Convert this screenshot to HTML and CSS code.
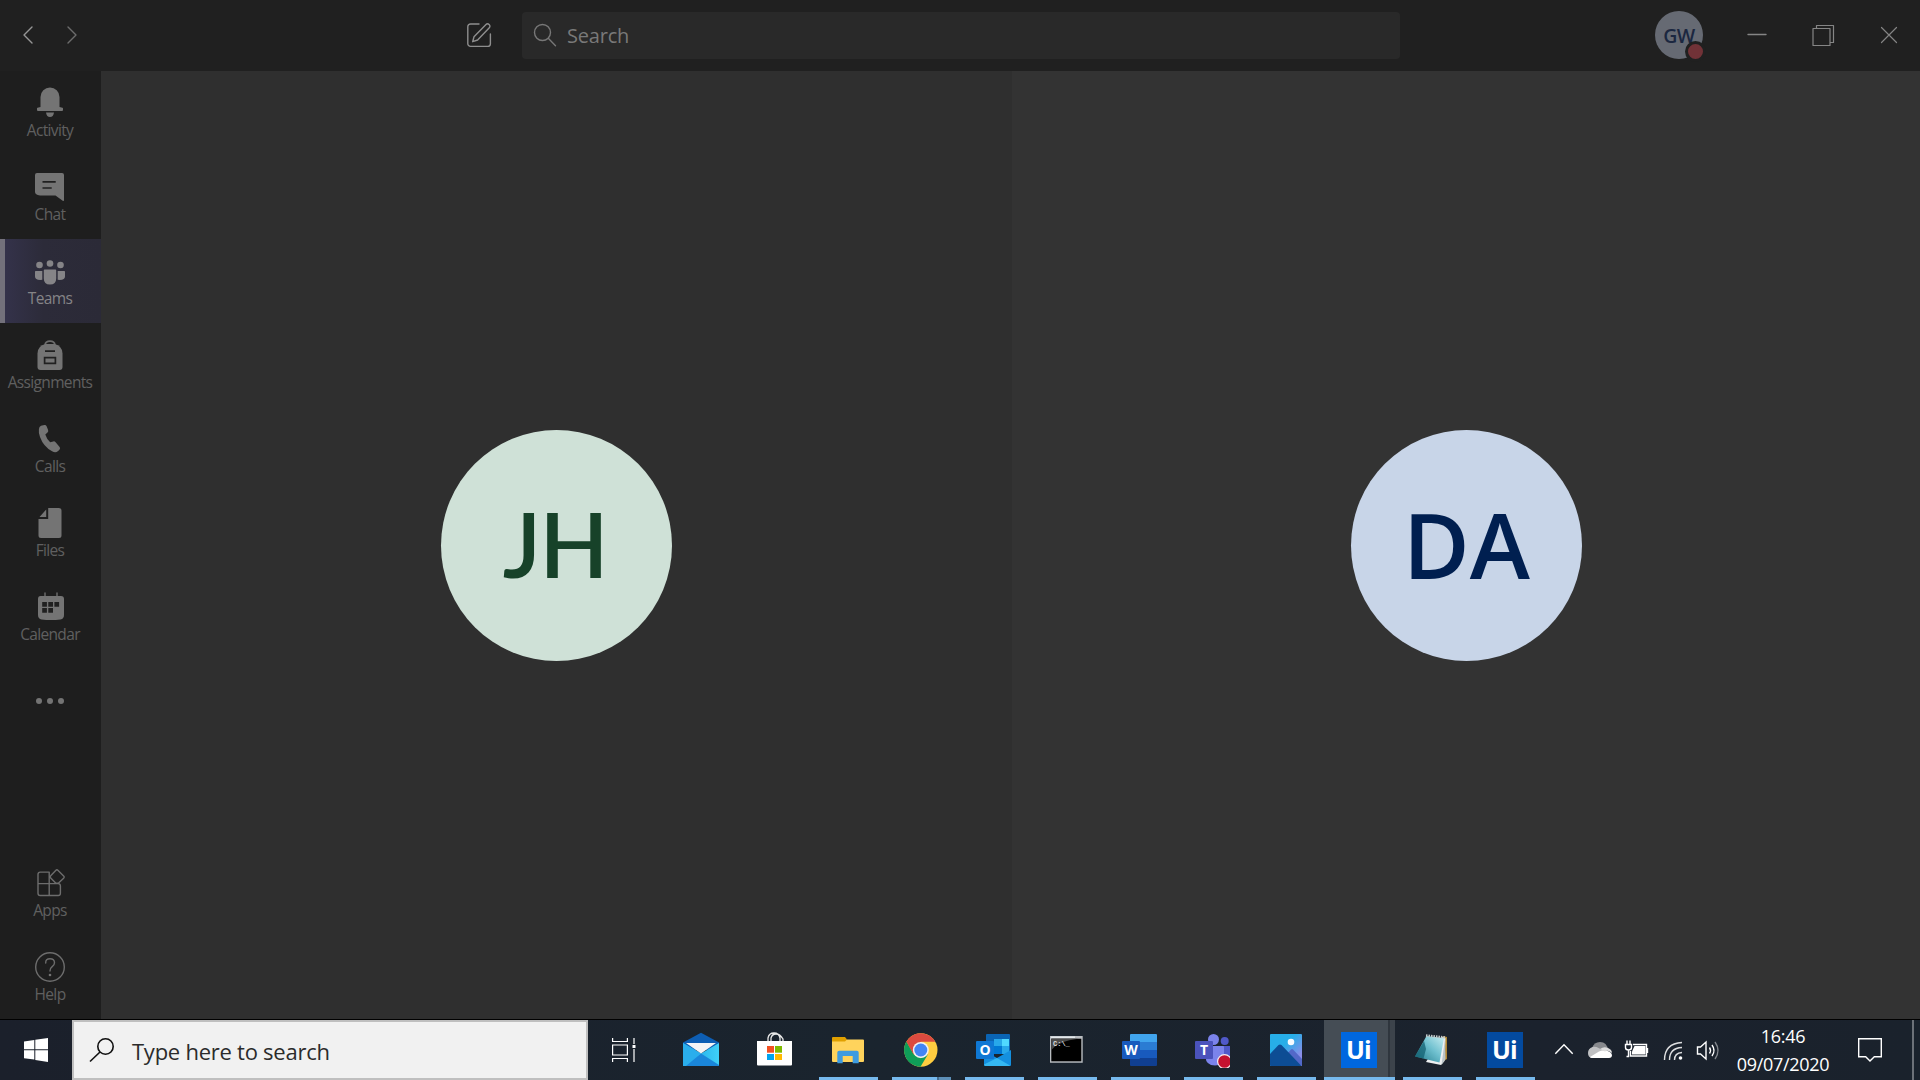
FILE: index.html
```html
<!DOCTYPE html>
<html lang="en">
<head>
<meta charset="utf-8">
<title>Microsoft Teams</title>
<link rel="stylesheet" href="styles.css">
</head>
<body>
<div class="screen">
  <header class="topbar">
    <nav class="history">
      <svg width="22" height="24" viewBox="0 0 22 24"><path class="line" d="M15 4 7 12l8 8"/></svg>
      <svg class="dim" width="22" height="24" viewBox="0 0 22 24"><path class="line" d="M8 4l8 8-8 8"/></svg>
    </nav>
    <svg class="compose" width="28" height="28" viewBox="0 0 28 28"><path class="line" d="M14 3H5.5A2.7 2.7 0 0 0 2.800 5.700v17a2.700 2.700 0 0 0 2.700 2.700h17.200a2.700 2.700 0 0 0 2.700-2.700V13"/><path class="line" d="M7.700 20.700l1.300-5 12-12.300a2.100 2.100 0 0 1 3 0l.3.300a2.100 2.100 0 0 1 0 3L12.600 19z"/></svg>
    <div class="search">
      <svg width="24" height="24" viewBox="0 0 24 24"><circle class="line" cx="9.500" cy="9.500" r="8"/><path class="line" d="M15.300 15.300l7.200 7.400"/></svg>
      <span>Search</span>
    </div>
    <div class="me"><span>GW</span><i class="presence"></i></div>
    <div class="window-buttons">
      <svg width="24" height="24" viewBox="0 0 24 24"><path class="line" d="M3 11.500h18"/></svg>
      <svg width="24" height="24" viewBox="0 0 24 24"><path class="line thin" d="M2 5.500h17v17H2zM5.500 5V2.500H22.500V19.500H19.500"/></svg>
      <svg width="24" height="24" viewBox="0 0 24 24"><path class="line thin" d="M4.500 4.500l15 15m0-15l-15 15"/></svg>
    </div>
  </header>

  <div class="body">
    <aside class="rail">
      <div class="item"><svg viewBox="30 13 40 40"><path d="M40.500 36V26a9.500 9.500 0 0 1 19 0V36l3 .8a1 1 0 0 1 .5.8V39q0 .9-1 .9H38q-1 0-1-.9v-1.400a1 1 0 0 1 .5-.8zM46 41.500h8q-.7 4.500-4 4.500t-4-4.500z"/></svg><span>Activity</span></div>
      <div class="item"><svg viewBox="30 13 40 40"><path d="M37 18h25q2 0 2 2v25q0 1.400-1.300.7L55.500 40.400H40Q35 40 35 37V20q0-2 2-2z"/><path class="cut" d="M42.500 26.800h13.200M42.500 33h9.200"/></svg><span>Chat</span></div>
      <div class="item selected"><svg viewBox="30 13 40 40"><circle cx="39.500" cy="26" r="3.300"/><circle cx="50" cy="24.500" r="3.300"/><circle cx="60.500" cy="26" r="3.300"/><path d="M44.500 30.500h11q.7 0 .7.700v8.300q0 6-6.200 6t-6.200-6v-8.300q0-.7.700-.7zM35.700 32h6.600v8.800q-7.300.7-7.300-3.300v-4.800q0-.7.700-.7zM57.700 32h6.600q.7 0 .7.700v4.800q0 4-7.300 3.300z"/></svg><span>Teams</span></div>
      <div class="item"><svg viewBox="30 13 40 40"><path class="line bold" d="M45 22q.5-3.800 5-3.800t5 3.800"/><path d="M45.500 21h9q8 2 8 9.500V44q0 3-3 3h-19q-3 0-3-3V30.500q0-7.500 8-9.500z"/><path class="cut" d="M45 28.100h10M44.600 34.700h10.800v5.600H44.600z"/></svg><span>Assignments</span></div>
      <div class="item"><svg viewBox="30 13 40 40"><path d="M41 18.800l3.300-.8q1.600-.3 2.300 1.200l1.500 3.700q.5 1.500-.6 2.600l-2.200 2.100q1.300 4.500 4.900 7.700l3-.9q1.500-.4 2.400.9l4 4.600q1 1.300 0 2.500l-1.500 1.600q-2.500 2.200-6 .3-8.500-4.500-12.100-14.300-1.600-4.500-1.100-7.700.2-2.600 2.100-3.500z"/></svg><span>Calls</span></div>
      <div class="item"><svg viewBox="30 13 40 40"><path d="M48.200 17h10.600q2.700 0 2.700 2.500v25q0 2.500-2.500 2.500H41q-2.500 0-2.500-2.500V28h9.700zM46.200 18.500V26h-6.700z"/></svg><span>Files</span></div>
      <div class="item"><svg viewBox="30 13 40 40"><path d="M45 18v4M57 18v4" class="line"/><path d="M40.500 21H61q3 0 3 3v16q0 3.800-3.500 4.400-9.500 1.400-19 0Q38 43.800 38 40V24q0-3 2.500-3z"/><path fill="#202020" d="M42.200 27h4.700v4.700h-4.700zm6.100 0H53v4.700h-4.700zm6.100 0h4.700v4.700h-4.700zM42.200 33h4.700v4.700h-4.700zm6.100 0H53v4.700h-4.700z"/></svg><span>Calendar</span></div>
      <div class="item"><svg viewBox="30 13 40 58" class="more"><circle cx="39" cy="42" r="3"/><circle cx="50" cy="42" r="3"/><circle cx="61" cy="42" r="3"/></svg></div>
      <div class="item apps"><svg viewBox="30 13 40 40"><path class="line" d="M49.200 21.100h-9q-2.200 0-2.200 2.200v19q0 2.200 2.200 2.200h18q2.200 0 2.200-2.200v-7.500q0-2.200-2.200-2.200H38M49.200 21.100V44.500M50.700 24.700l5-5.300q1.200-1.200 2.400 0l5.500 5.500q1.200 1.200 0 2.400l-5.300 5h-2.400l-5.200-5.200q-1.100-1.200 0-2.400z"/></svg><span>Apps</span></div>
      <div class="item"><svg viewBox="30 13 40 40"><circle class="line" cx="50" cy="32" r="14.300"/><path class="line" d="M45.700 28q-.2-4.200 4.300-4.200t4.500 4q0 2.200-2.300 3.800-2.200 1.500-2.200 4.400"/><circle cx="50" cy="40" r="1.300"/></svg><span>Help</span></div>
    </aside>
    <main class="stage">
      <section class="tile first"><div class="avatar green"><span>JH</span></div></section>
      <section class="tile second"><div class="avatar blue"><span>DA</span></div></section>
    </main>
  </div>

  <footer class="taskbar">
    <div class="start"><svg width="24" height="24" viewBox="0 0 24 24"><path fill="#fff" d="M0 3.500l10.300-1.500v9.300H0zM11.300 1.800L24 0v11.300H11.300zM0 12.300h10.300v9.300L0 20.200zM11.300 12.300H24V24l-12.700-1.900z"/></svg></div>
    <div class="find">
      <svg width="26" height="26" viewBox="0 0 26 26"><g fill="none" stroke="#111" stroke-width="1.600"><circle cx="16.500" cy="9.500" r="7.700"/><path d="M11 15L1 24.500"/></g></svg>
      <span>Type here to search</span>
    </div>
    <div class="taskview"><svg width="26" height="24" viewBox="0 0 26 24"><g fill="none" stroke="#fff" stroke-width="1.200"><path d="M1.600 0v3.500h14.800V0M1.600 7h14.800v10H1.600zM1.600 24v-3.500h14.800V24M23 0v6M23 11v13"/></g><path fill="#fff" d="M21.500 7h3v3h-3z"/></svg></div>

    <div class="apps-strip">
      <div class="app"><svg viewBox="0 0 36 36">
        <defs><linearGradient id="mail" x1="0" x2="1"><stop offset="0" stop-color="#1b9fe4"/><stop offset="1" stop-color="#3fd0f7"/></linearGradient></defs>
        <path fill="#0d5eb4" d="M18 .7L36 10.500V18H0V10.500z"/><path fill="url(#mail)" d="M0 11l18 10.500L36 11v23H0z"/><path fill="#1a86da" d="M18 21.500L36 33v1H0z"/><path fill="#2aaeec" d="M0 11l18 10.500L3 34H0z"/><path fill="#f4f4f6" d="M3 11h30L18 21.500z"/></svg></div>
      <div class="app"><svg viewBox="0 0 36 36"><g fill="none" stroke="#e8e8e8" stroke-width="1.300"><path d="M12 10V6q1-5 6-5t6 5v4M15 10V6q1-4 5-4t7 5v3"/></g><path fill="#fff" d="M1 9h35v23.500q0 1-1 1H2q-1 0-1-1z"/><path fill="#f25022" d="M11 14h7v6.700h-7z"/><path fill="#7fba00" d="M19 14h7v6.700h-7z"/><path fill="#00a4ef" d="M11 22h7v6h-7z"/><path fill="#ffb900" d="M19 22h7v6h-7z"/></svg></div>
      <div class="app open"><svg viewBox="0 0 36 36"><path fill="#e0a000" d="M3 6q0-1 1-1h12l2 2.500V14H3z"/><path fill="#ffd35c" d="M3 9.500h13l2-2h16q1 0 1 1V29q0 1-1 1H4q-1 0-1-1z"/><path fill="#3e9be0" d="M8.300 31.300V20.500q0-1.800 1.800-1.800h17.800q1.800 0 1.800 1.800v10.800H23.700V24h-10v7.300z"/></svg></div>
      <div class="app open grouped"><svg viewBox="0 0 36 36"><circle cx="18.800" cy="18" r="16.700" fill="#ffcd40"/><path fill="#db4a3f" d="M4.400 9.600A16.700 16.700 0 0 1 33.300 9.700H18.800L11.600 22.200z"/><path fill="#0f9d58" d="M4.400 9.500A16.700 16.700 0 0 0 18.500 34.700L26 22.200 18.800 26.300 11.600 22.200z"/><path fill="#db4a3f" d="M4.400 9.500L11.600 22.200 13 12z"/><circle cx="18.800" cy="18" r="8" fill="#f1f1f1"/><circle cx="18.800" cy="18" r="6.500" fill="#4285f4"/></svg></div>
      <div class="app open"><svg viewBox="0 0 36 36"><path fill="#0a64b4" d="M11 3q0-1 1-1h22q1 0 1 1v18H11z"/><path fill="#28a8ea" d="M19 7h8v7h-8z"/><path fill="#50d9ff" d="M27 7h7v7h-7z"/><path fill="#0078d4" d="M19 14h8v8h-8z"/><path fill="#28a8ea" d="M27 14h7v8h-7z"/><path fill="#1490df" d="M9 19l13 7 14-8v15q0 1-1 1H10q-1 0-1-1z"/><path fill="#35b8f1" d="M9 32.500L22 26l13 7.500-1 .5H10z"/><rect x="1" y="9" width="18" height="18" rx="1" fill="#0f78d4"/><text x="10" y="23" class="badge-letter">O</text></svg></div>
      <div class="app open"><svg viewBox="0 0 36 36"><path fill="#b9bdc1" d="M2 4h32.700v26.700H2z"/><path fill="#e3e8ec" d="M3 4.500h24v1.500H3z"/><path fill="#000" d="M3.300 6.700h30v22.600h-30z"/><path fill="#4a4a4a" d="M3.300 6.700h27Q11 8.500 3.300 18z"/><text x="5" y="13.700" class="prompt">C:\_</text></svg></div>
      <div class="app open"><svg viewBox="0 0 36 36"><path fill="#41a5ee" d="M9 3q0-1 1-1h25q1 0 1 1v7H9z"/><path fill="#2b7cd3" d="M9 10h27v8H9z"/><path fill="#185abd" d="M9 18h27v8H9z"/><path fill="#103f91" d="M9 26h27v7q0 1-1 1H10q-1 0-1-1z"/><rect x="1" y="9" width="18" height="18" rx="1" fill="#185abd"/><text x="10" y="23" class="badge-letter">W</text></svg></div>
      <div class="app open"><svg viewBox="0 0 36 36"><circle cx="30.700" cy="9" r="4" fill="#5059c9"/><circle cx="19.500" cy="7.500" r="5.500" fill="#7b83eb"/><path fill="#5059c9" d="M27 14h9v12q0 6-7 6z"/><path fill="#7b83eb" d="M12 14h17q1 0 1 1v10q0 8.500-9 8.500T11.500 25z"/><rect x="1" y="9" width="18" height="18" rx="1" fill="#4b53bc"/><text x="10" y="23" class="badge-letter">T</text><circle cx="30.500" cy="29.500" r="6.900" fill="#c4112f" stroke="#f4eef0" stroke-width="1.200"/></svg></div>
      <div class="app open"><svg viewBox="0 0 36 36"><defs><linearGradient id="sky" x1="0" y1="0" x2="1" y2="1"><stop offset=".4" stop-color="#27aee8"/><stop offset=".8" stop-color="#8b8de8"/></linearGradient></defs><rect x="3" y="2" width="32" height="32" rx="1" fill="url(#sky)"/><path fill="#5368c8" d="M20 22l4-4.500q1-.8 2 0L35 27v6q0 1-1 1H20z"/><path fill="#0d4d94" d="M3 22l8.500-9q1.500-1 3 0L34 33.500q-.4.500-1 .5H4q-1 0-1-1z"/><circle cx="24" cy="10" r="3.300" fill="#f7fbff"/></svg></div>
      <div class="app open active"><svg viewBox="0 0 36 36"><path fill="#0067df" d="M0 0h36v36H0z"/><text x="5" y="27" class="ui-logo">Ui</text></svg></div>
      <div class="app open"><svg viewBox="0 0 36 36"><defs><linearGradient id="note" x1="0" y1="1" x2="1" y2="0"><stop offset="0" stop-color="#1d7688"/><stop offset=".55" stop-color="#6fc0cf"/><stop offset="1" stop-color="#c9eef2"/></linearGradient></defs><path fill="#b08632" d="M30 4l4 1v22l-5 3z"/><path fill="#eceff0" d="M29 5l3.500 1-1 23-3.500 4-15-3z"/><path fill="#b9c3c7" d="M32 7l.5 20-4 6z"/><path fill="url(#note)" d="M13.500 4L31 6 26.500 30.500 2 24.500z"/><path fill="#146173" d="M11 9l2 8-2.500 9.500-8.500-2z" opacity=".75"/><path stroke="#c3c9c9" stroke-width="2.500" stroke-dasharray="1.500 1" d="M13 3.500l19 2"/></svg></div>
      <div class="app open last"><svg viewBox="0 0 36 36"><path fill="#034a9f" d="M0 0h36v36H0z"/><text x="5" y="27" class="ui-logo">Ui</text></svg></div>
    </div>

    <div class="tray">
      <svg width="31" height="60" viewBox="1549 0 31 60"><path class="wline" d="M1555.300 33.700l8.700-9 8.700 9"/></svg>
      <svg width="38" height="60" viewBox="1580 0 38 60"><path fill="#87898d" d="M1592 28q2-6 8-6 7 0 8 8l-8 3z"/><path fill="#c0c1c3" d="M1592 38q-4-.5-4-5t4.500-6q3-1 6 1l6 3-8 7z"/><path fill="#fff" d="M1590 37l9-5.500q3-1.500 5-1 7 0 8 4.500 0 3-3 3h-17q-1.500 0-2-1z"/><path fill="#dcdcdc" d="M1600 29q4-3 8-1 4 1.500 4 5l-3-1.700q-2-1-4 .2z"/></svg>
      <svg width="37" height="60" viewBox="1618 0 37 60"><path class="wline" d="M1633 24.500h13.500v11.500h-16v-5M1647.500 28v5M1625.500 24.500h6v3q0 2.500-3 2.500t-3-2.500zM1627 24v-3.500M1630 24v-3.500M1628.500 30v6.500h-2"/><path fill="#fff" d="M1634.500 26h11v8.500h-13.500v-3z"/></svg>
      <svg width="35" height="60" viewBox="1655 0 35 60"><path class="wline" d="M1664.500 40q0-16.500 17.500-17.500M1669.500 40q0-12 12.500-12.500M1674.500 40q0-7 7.500-7.500" opacity=".85"/><circle cx="1680.500" cy="38" r="1.800" fill="#fff"/></svg>
      <svg width="36" height="60" viewBox="1690 0 36 60"><path class="wline" d="M1697.500 27h3l5.500-5v17l-5.500-5h-3zM1709.500 27.500q2 3 0 6M1712 25q4 5.500 0 11"/><path class="wline" d="M1715 22q6 8.500 0 17" opacity=".45"/></svg>
      <div class="clock"><span class="time">16:46</span><span class="date">09/07/2020</span></div>
      <svg width="50" height="60" viewBox="1840 0 50 60"><path class="wline" d="M1858.700 18.700h22.600v18.100h-7l-4.300 4.300-4.300-4.300h-7z"/></svg>
      <i class="show-desktop"></i>
    </div>
  </footer>
</div>
</body>
</html>
```
FILE: styles.css
```css
* { box-sizing: border-box; }
body { margin: 0; background: #202020; font-family: "Open Sans", "Noto Sans", sans-serif; }
.screen { width: 1920px; height: 1080px; display: flex; flex-direction: column; overflow: hidden; }
svg { display: block; flex: none; }
.line { fill: none; stroke: #858585; stroke-width: 1.400; stroke-linecap: round; stroke-linejoin: round; }
.thin { stroke-width: 1.200; }
.bold { stroke-width: 1.700; }

.topbar { height: 71px; flex: none; display: flex; align-items: center; padding-bottom: 1px; background: #202020; }
.history { display: flex; gap: 21px; width: 465px; padding-left: 17px; }
.history .line { stroke: #969696; }
.history .dim .line { stroke: #6c6c6c; }
.compose .line { stroke: #8e8e8e; }
.search { width: 878px; height: 47px; margin-left: 29px; padding-left: 11px; display: flex; align-items: center; gap: 10px; border-radius: 4px; background: #292929; color: #797979; font-size: 20px; letter-spacing: -.2px; }
.search .line { stroke: #777; }
.me { position: relative; width: 48px; height: 48px; margin-left: 255px; border-radius: 50%; background: #666a73; color: #1b2740; display: flex; align-items: center; justify-content: center; font-size: 19.500px; font-weight: 600; letter-spacing: -.5px; }
.presence { position: absolute; right: -3px; bottom: -3px; width: 21px; height: 21px; border-radius: 50%; border: 3px solid #202020; background: #713237; }
.window-buttons { display: flex; gap: 42px; margin-left: 42px; }

.body { flex: 1; display: flex; min-height: 0; }
.rail { width: 101px; background: #1e1e1e; display: flex; flex-direction: column; }
.item { height: 84px; flex: none; display: flex; flex-direction: column; align-items: center; padding: 13px 1px 0 0; color: #606060; font-size: 15.500px; line-height: 12px; letter-spacing: -.65px; }
.item svg { width: 40px; height: 40px; fill: #747474; }
.item .more { height: 58px; }
.item span { white-space: nowrap; }
.item .line { fill: none; stroke: #6d6d6d; }
.item .cut { fill: none; stroke: #202020; stroke-width: 1.700; }
.selected { background: linear-gradient(90deg, #34324a, #2c2b39 40%, #2b2a37); border-left: 5px solid #73717b; color: #858487; padding-right: 6px; }
.selected svg { fill: #858487; }
.apps { margin-top: 108px; }

.stage { flex: 1; display: grid; grid-template-columns: 911px 908px; }
.tile { display: flex; align-items: center; justify-content: center; padding-top: 1px; }
.first { background: #2f2f2f; }
.second { background: #333; padding-left: 1px; }
.avatar { width: 231px; height: 231px; border-radius: 50%; display: flex; align-items: center; justify-content: center; font-size: 91px; line-height: 1; font-weight: 600; }
.green { background: #cfe1d7; color: #174229; font-family: "Lato", sans-serif; font-size: 90px; letter-spacing: -1.500px; padding: 0 3px 5px 0; }
.blue { background: #c8d5e8; color: #001f50; padding-bottom: 3px; }

.taskbar { height: 61px; flex: none; display: flex; border-top: 1px solid #000; background: linear-gradient(90deg, #1b202b, #1a242e 45%, #1b222d 80%, #1a222c); }
.start { width: 72px; display: grid; place-items: center; }
.find { width: 516px; border: 2px solid #bfbfbf; background: #f1f1f1; display: flex; align-items: center; padding-left: 15px; gap: 17px; color: #2b2b2b; font-size: 22px; letter-spacing: -.25px; }
.find span { padding-top: 2px; }
.taskview { width: 77px; padding: 18px 0 0 23px; }
.apps-strip { display: flex; width: 884px; }
.app { width: 73px; flex: none; padding: 12px 0 0 18px; background-repeat: no-repeat; }
.last { padding-left: 19px; }
.app svg { width: 36px; height: 36px; }
.open { background-image: linear-gradient(#76b9ed, #76b9ed); background-size: 59px 3px; background-position: 8px 57px; }
.grouped { background-image: linear-gradient(90deg, #76b9ed 45px, #456b8c 45px, #456b8c 47px, #5d8fb7 47px); }
.active { padding-left: 19px; background-image: linear-gradient(#76b9ed, #76b9ed), linear-gradient(90deg, #454d55 64px, #2f363e 64px, #2f363e 66px, #3c434b 66px); background-size: 71px 3px, 71px 60px; background-position: 2px 57px, 2px 0; }
.badge-letter { fill: #fff; font-size: 14px; font-weight: 700; text-anchor: middle; }
.prompt { fill: #ddd; font: 700 7px "Liberation Mono", monospace; }
.ui-logo { fill: #fff; font: 700 25px "Open Sans", sans-serif; letter-spacing: -.8px; }
.tray { flex: 1; display: flex; }
.wline { fill: none; stroke: #fff; stroke-width: 1.400; }
.clock { width: 114px; display: flex; flex-direction: column; align-items: center; padding-top: 2px; color: #fff; font-size: 18px; line-height: 28px; letter-spacing: -.3px; }
.show-desktop { width: 2px; margin-left: 22px; background: #6c7178; }
```
